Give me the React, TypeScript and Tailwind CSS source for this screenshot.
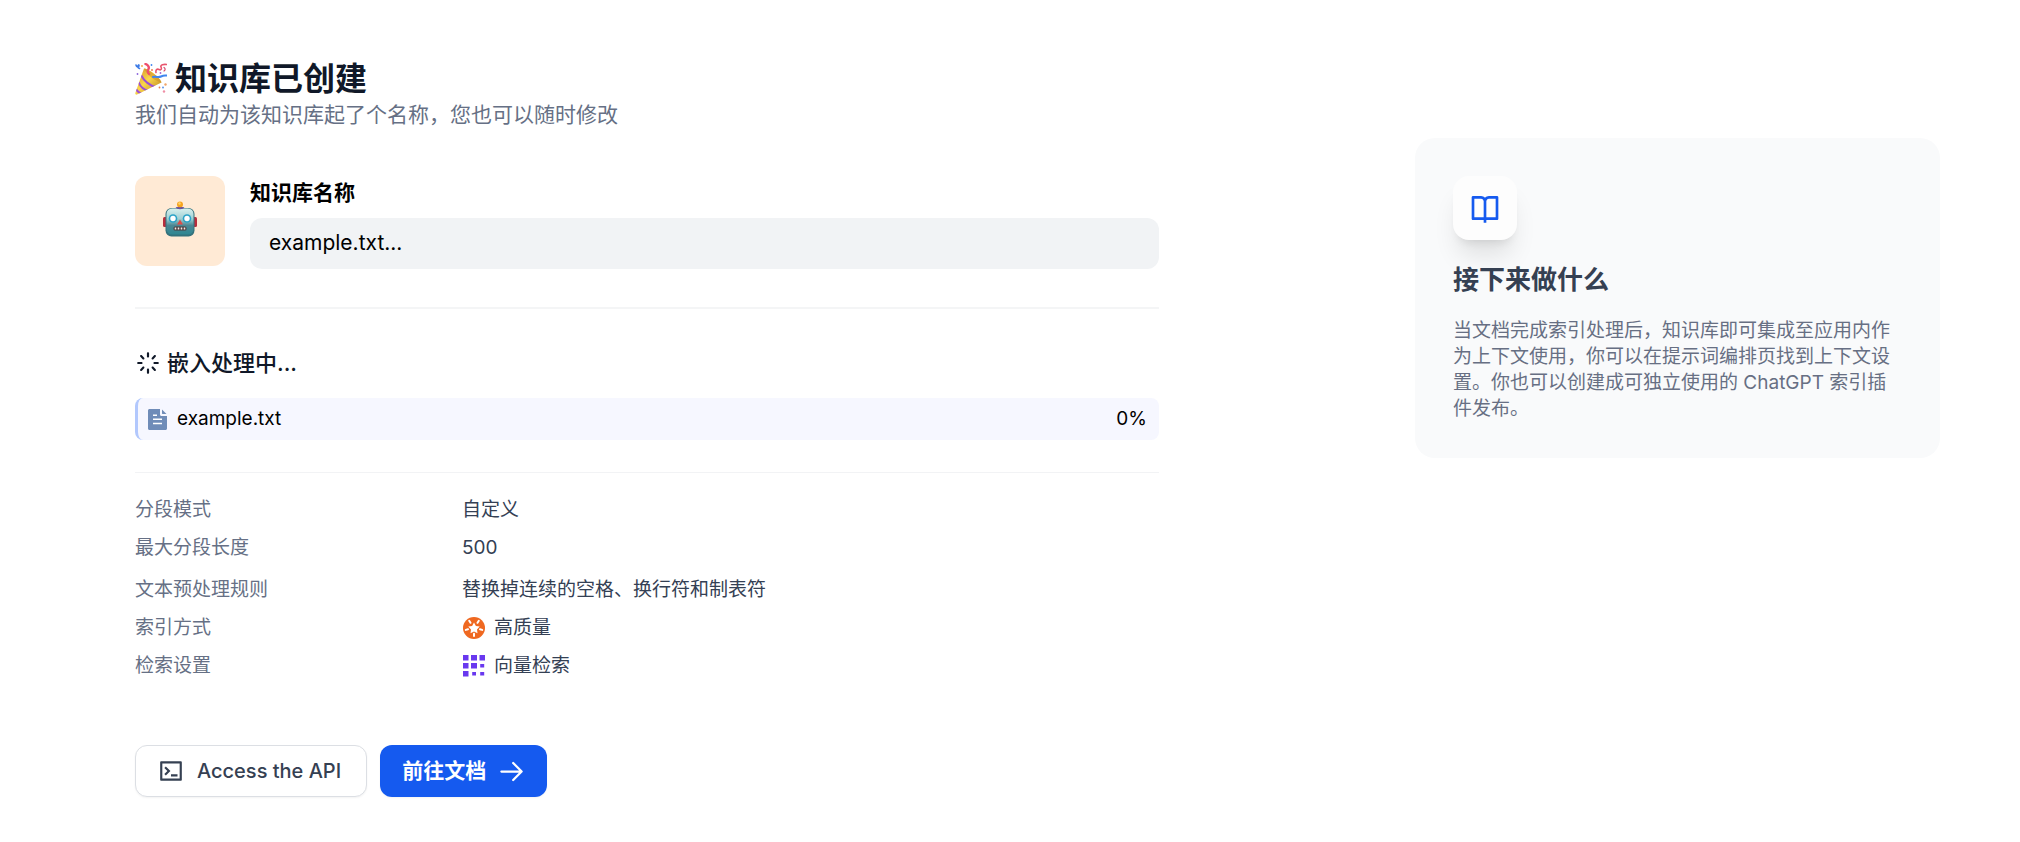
import type { ReactNode } from 'react';
import { RiBookOpenLine, RiLoader2Line, RiTerminalBoxLine } from 'react-icons/ri';
import { HiOutlineArrowRight } from 'react-icons/hi2';

interface RuleItem {
    label: string;
    value: string;
    icon?: ReactNode;
}

function PartyIcon() {
    return (
        <svg viewBox="0 0 32 32" className="h-8 w-8 shrink-0" aria-hidden="true">
            <defs>
                <linearGradient id="cone" x1="0" y1="0.2" x2="0.8" y2="1">
                    <stop offset="0" stopColor="#d99a2b" />
                    <stop offset="0.45" stopColor="#fbd74b" />
                    <stop offset="1" stopColor="#c08a20" />
                </linearGradient>
                <clipPath id="coneClip">
                    <path d="M9 5.500C12 4.500 25 14 26.500 19.500L2 31.500C.8 32 0 31 .3 30Z" />
                </clipPath>
            </defs>
            <path d="M9 5.500C12 4.500 25 14 26.500 19.500L2 31.500C.8 32 0 31 .3 30Z" fill="url(#cone)" />
            <g clipPath="url(#coneClip)" fill="none" stroke="#9a4fd6" strokeWidth="2">
                <path d="M6 12C9 18 15 23 21 24" />
                <path d="M3.500 19C5 23 9 27 14 28" />
                <path d="M1 26C2 28 4 30 7 31" />
            </g>
            <path d="M9 5.500C14 7 24 13 26.500 19.500C20 18 12 12 9 5.500Z" fill="#c98a26" opacity="0.5" />
            <g fill="none" strokeLinecap="round">
                <path d="M18 14C21 13 23 15 26 13.500S30 12.500 31.500 12.500" stroke="#3f86ee" strokeWidth="2" />
                <path d="M10.500 1C13 2 14.500 4 13.500 6S12 9 14 11" stroke="#ef4e6b" strokeWidth="2.400" />
                <path d="M21 9.500C20.500 7 22 5.500 24 6.500S27 6 26 4 29 1 31.500 1.500" stroke="#e8556d" strokeWidth="1.600" />
                <path d="M1 2C1.500 4.500 4 4.500 4 2.500S1 4 4.500 5.500" stroke="#3d7be6" strokeWidth="1.600" />
                <path d="M29 4.500C30.500 5.500 30.500 7 29 8" stroke="#d8466a" strokeWidth="1.200" />
            </g>
            <circle cx="16.500" cy="2" r="0.900" fill="#3f86ee" />
            <circle cx="17" cy="7" r="0.900" fill="#ef6f3c" />
            <circle cx="7" cy="3" r="0.900" fill="#f3a53b" />
            <circle cx="2.500" cy="11" r="0.900" fill="#8b63db" />
            <circle cx="25.500" cy="10" r="0.900" fill="#a25fd0" />
            <circle cx="30.500" cy="21.500" r="1.200" fill="#f0a468" />
            <circle cx="29" cy="28.500" r="1.200" fill="#ef8fa6" />
            <circle cx="24.500" cy="24.500" r="0.900" fill="#e87b4a" />
            <circle cx="28" cy="24.500" r="0.900" fill="#4d8be8" />
        </svg>
    );
}

function RobotIcon() {
    return (
        <svg viewBox="0 0 34 36" className="h-9 w-[34px]" aria-hidden="true">
            <defs>
                <linearGradient id="face" x1="0" y1="0" x2="0" y2="1">
                    <stop offset="0" stopColor="#d9f0ee" />
                    <stop offset="0.4" stopColor="#9fd0d3" />
                    <stop offset="0.65" stopColor="#4b8793" />
                    <stop offset="1" stopColor="#2f8792" />
                </linearGradient>
            </defs>
            <rect x="0" y="16" width="4" height="10" rx="1.500" fill="#b92d3c" />
            <rect x="30" y="16" width="4" height="10" rx="1.500" fill="#b92d3c" />
            <path d="M12 8C12 5 22 5 22 8Z" fill="#6a5299" />
            <circle cx="17" cy="3.500" r="3" fill="#f7a420" />
            <circle cx="16.500" cy="2.500" r="1.200" fill="#ffd56a" />
            <rect x="2.500" y="7" width="29" height="28.500" rx="6" fill="#35727c" />
            <rect x="3.500" y="7.500" width="27" height="26" rx="5.500" fill="url(#face)" />
            <path d="M13 6.500H21C21 8.800 13 8.800 13 6.500Z" fill="#6a5299" />
            <circle cx="10" cy="17.500" r="4.300" fill="#2ba3c7" />
            <circle cx="24" cy="17.500" r="4.300" fill="#2ba3c7" />
            <circle cx="10" cy="17.500" r="2.700" fill="#fff" />
            <circle cx="24" cy="17.500" r="2.700" fill="#fff" />
            <path d="M17 18.500L20 23.500H14Z" fill="#dc4b47" />
            <rect x="10.500" y="25.500" width="13" height="4" rx="1.500" fill="#4b3a3d" />
            <path d="M12.500 26.500V28.500M15.500 26.500V28.500M18.500 26.500V28.500M21.500 26.500V28.500" stroke="#f4ece4" strokeWidth="1.600" />
        </svg>
    );
}

function FileIcon() {
    return (
        <svg viewBox="0 0 19 21" className="h-[21px] w-[19px] shrink-0" aria-hidden="true">
            <path d="M1.500 0H12V5.500C12 6.300 12.700 7 13.500 7H19V19.500C19 20.300 18.300 21 17.500 21H1.500C.7 21 0 20.300 0 19.500V1.500C0 .7.7 0 1.500 0Z" fill="#6f8cb8" />
            <path d="M14 .5L18.500 5H14.500C14.200 5 14 4.800 14 4.500Z" fill="#6f8cb8" />
            <path d="M5 6.200H9M5 10.200H14M5 14.500H14" stroke="#fff" strokeWidth="1.500" />
        </svg>
    );
}

function QualityIcon() {
    return (
        <svg viewBox="-1 -1 24 24" className="h-6 w-6" aria-hidden="true">
            <circle cx="11" cy="11" r="11" fill="#ef6820" />
            <path d="M11 5.500L12.900 8.900L16.700 9.600L14 12.400L14.500 16.300L11 14.600L7.500 16.300L8 12.400L5.300 9.600L9.100 8.900Z" fill="#fff" />
            <path d="M11 16.800V19M6.200 3.800L7.500 5.800M15.800 3.800L14.500 5.800M2.800 12.900L5 12.300M19.200 12.900L17 12.300" stroke="#fff" strokeWidth="2" strokeLinecap="round" />
        </svg>
    );
}

function VectorIcon() {
    return (
        <svg viewBox="-1 -1 24 24" className="h-6 w-6" fill="#6938ef" aria-hidden="true">
            <path d="M0 0h5.500v5.500H0zM8 0h6v5.500H8zM16.500 0H22v5.500h-5.500zM0 8h5.500v5.500H0zM8 8h6v5.500H8zM17.200 9h4v3.500h-4zM0 16h5.500v5.500H0zM9.200 17h3.800v3.500H9.200zM17.200 17h4v3.500h-4z" />
        </svg>
    );
}

const segmentRules: RuleItem[] = [
    { label: '分段模式', value: '自定义' },
    { label: '最大分段长度', value: '500' },
];

const indexRules: RuleItem[] = [
    { label: '文本预处理规则', value: '替换掉连续的空格、换行符和制表符' },
    { label: '索引方式', value: '高质量', icon: <QualityIcon /> },
    { label: '检索设置', value: '向量检索', icon: <VectorIcon /> },
];

function RuleList({ items }: { items: RuleItem[] }) {
    return (
        <dl>
            {items.map((item) => (
                <div key={item.label} className="flex h-[38px] items-center text-[19px] leading-7">
                    <dt className="w-[327px] shrink-0 text-[#667085]">{item.label}</dt>
                    <dd className="flex items-center gap-2 text-[#344054]">
                        {item.icon}
                        {item.value}
                    </dd>
                </div>
            ))}
        </dl>
    );
}

export default function App() {
    return (
        <div className="flex min-h-screen items-start justify-between gap-16 bg-white pr-20 pl-[135px] font-['Inter','Noto_Sans_CJK_SC',sans-serif]">
            <main className="max-w-[1024px] flex-1 pt-[60px]">
                <h1 className="flex items-center gap-2 text-[32px] leading-[38px] font-bold text-[#101828]">
                    <PartyIcon />
                    知识库已创建
                </h1>
                <p className="text-[21px] leading-[34px] text-[#667085]">我们自动为该知识库起了个名称，您也可以随时修改</p>

                <div className="mt-11 flex items-start gap-[25px]">
                    <div className="flex h-[90px] w-[90px] shrink-0 items-center justify-center rounded-xl bg-[#ffead5] pb-1">
                        <RobotIcon />
                    </div>
                    <div className="flex-1">
                        <label htmlFor="dataset-name" className="block text-[21px] leading-[34px] font-bold text-black">知识库名称</label>
                        <input
                            id="dataset-name"
                            type="text"
                            readOnly
                            defaultValue="example.txt..."
                            className="mt-2 block h-[51px] w-full rounded-xl bg-[#f1f3f5] px-[19px] pb-[2px] text-[21px] text-black outline-none"
                        />
                    </div>
                </div>

                <hr className="mt-[38px] border-t-2 border-[#f4f5f6]" />

                <h2 className="mt-[38px] flex items-center gap-[6px] text-[22px] leading-8 font-medium text-[#101828]">
                    <RiLoader2Line className="h-[26px] w-[26px]" />
                    嵌入处理中...
                </h2>
                <div className="mt-[19px] flex h-[42px] items-center gap-[10px] rounded-lg border-l-[3px] border-[#b2c8fd] bg-[#f6f7ff] pr-3 pl-[10px] text-[19px] text-black">
                    <FileIcon />
                    <span className="flex-1">example.txt</span>
                    <span>0%</span>
                </div>

                <hr className="mt-8 mb-[18px] border-t border-[#f2f3f5]" />

                <div className="flex flex-col gap-1">
                    <RuleList items={segmentRules} />
                    <RuleList items={indexRules} />
                </div>

                <div className="mt-[60px] flex gap-[13px]">
                    <button type="button" className="flex h-[52px] items-center gap-[13px] rounded-xl border border-[#dcdfe4] bg-white pr-[25px] pl-[22px] text-[20px] font-medium text-[#354052] shadow-xs">
                        <RiTerminalBoxLine className="h-[26px] w-[26px]" />
                        Access the API
                    </button>
                    <button type="button" className="flex h-[52px] items-center gap-3 rounded-xl bg-[#155aef] px-[22px] text-[21px] font-bold text-white shadow-xs">
                        前往文档
                        <HiOutlineArrowRight className="h-[27px] w-[27px]" strokeWidth={2} />
                    </button>
                </div>
            </main>

            <aside className="mt-[138px] w-[525px] shrink-0 rounded-[20px] bg-[#f9fafb] px-[38px] pt-[38px] pb-9">
                <div className="flex h-16 w-16 items-center justify-center rounded-2xl bg-[#fdfdfd] shadow-xl">
                    <RiBookOpenLine className="h-8 w-8 text-[#155aef]" />
                </div>
                <h2 className="mt-6 text-[26px] leading-8 font-bold text-[#354052]">接下来做什么</h2>
                <p className="mt-[22px] text-[19px] leading-[26px] text-[#676f83]">
                    当文档完成索引处理后，知识库即可集成至应用内作为上下文使用，你可以在提示词编排页找到上下文设置。你也可以创建成可独立使用的 ChatGPT 索引插件发布。
                </p>
            </aside>
        </div>
    );
}
